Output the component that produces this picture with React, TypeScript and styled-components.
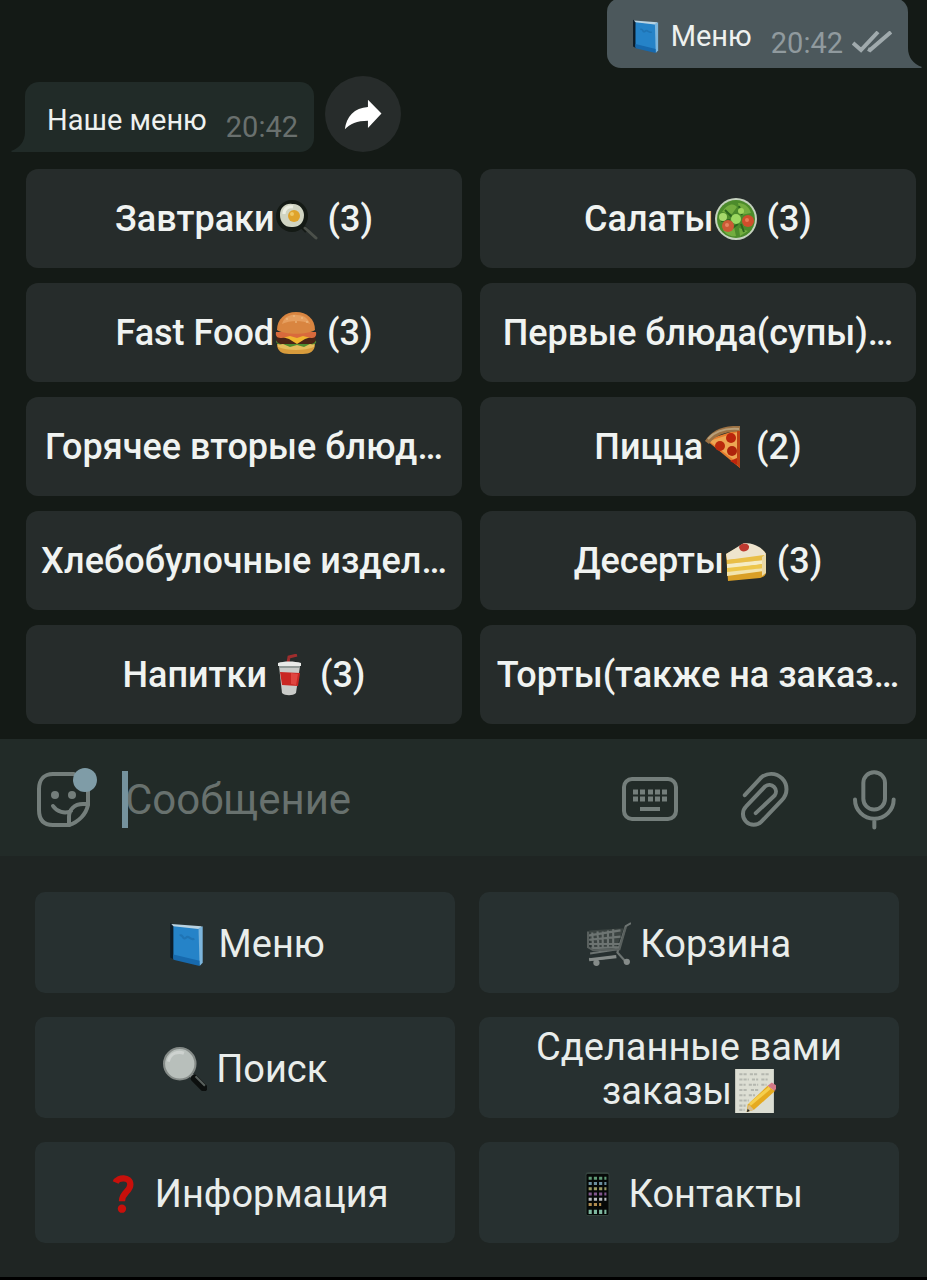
import React from "react";
import styled, { createGlobalStyle } from "styled-components";

const GlobalStyle = createGlobalStyle`
  *, *::before, *::after { box-sizing: border-box; }
  body {
    margin: 0;
    background: #000;
    font-family: Roboto, "Noto Sans", sans-serif;
  }
  button { font-family: inherit; border: 0; padding: 0; cursor: pointer; }
`;

const Screen = styled.main`
  display: flex;
  flex-direction: column;
  padding-bottom: 3px;
  overflow: hidden;
`;

/* ---------- chat ---------- */

const Chat = styled.section`
  display: flex;
  flex-direction: column;
  margin-top: -2px;
  padding: 0 11px 15px 25px;
  background: #141a16;
`;

const MessageRow = styled.div<{ $own?: boolean }>`
  display: flex;
  align-items: flex-end;
  gap: 11px;
  justify-content: ${(p) => (p.$own ? "flex-end" : "flex-start")};
  padding-right: ${(p) => (p.$own ? "8px" : "0")};
  margin-bottom: ${(p) => (p.$own ? "8px" : "17px")};
`;

const Bubble = styled.div<{ $own?: boolean }>`
  position: relative;
  display: flex;
  align-items: flex-end;
  padding: 20px 16px 8px 22px;
  border-radius: 14px;
  border-bottom-right-radius: ${(p) => (p.$own ? "0" : "14px")};
  border-bottom-left-radius: ${(p) => (p.$own ? "14px" : "0")};
  background: ${(p) => (p.$own ? "#4c585c" : "#212b28")};
`;

const Tail = styled.svg<{ $own?: boolean }>`
  position: absolute;
  bottom: 0;
  ${(p) => (p.$own ? "left: 100%;" : "right: 100%; transform: scaleX(-1);")}
  width: 14px;
  height: 20px;
  fill: ${(p) => (p.$own ? "#4c585c" : "#212b28")};
`;

const MessageText = styled.span`
  margin-bottom: 6px;
  font-size: 29px;
  line-height: 36px;
  color: #eef1ef;
  white-space: nowrap;
`;

const Time = styled.time<{ $own?: boolean }>`
  margin-left: 19px;
  font-size: 29px;
  line-height: 34px;
  color: ${(p) => (p.$own ? "#909a9e" : "#69706e")};
`;

const Checks = styled.svg`
  width: 40px;
  height: 22px;
  margin: 0 0 7px 9px;
  fill: none;
  stroke: #a0aaad;
  stroke-width: 4;
`;

const ShareButton = styled.button`
  display: grid;
  place-items: center;
  width: 76px;
  height: 76px;
  border-radius: 50%;
  background: #272c2b;
`;

/* ---------- inline menu ---------- */

const InlineMenu = styled.div`
  display: grid;
  grid-template-columns: 1fr 1fr;
  gap: 15px 18px;
  padding-left: 1px;
`;

const InlineButton = styled.button`
  height: 99px;
  overflow: hidden;
  border-radius: 12px;
  background: #262c2b;
  color: #f0f3f1;
  font-size: 36px;
  font-weight: 500;
  line-height: 42px;
  white-space: nowrap;
`;

/* ---------- message field ---------- */

const InputBar = styled.form`
  display: flex;
  align-items: center;
  height: 117px;
  padding: 3px 30px 0 36px;
  background: #222b28;
`;

const Field = styled.label`
  position: relative;
  flex: 1;
  min-width: 0;
  margin-left: 24px;
`;

const Caret = styled.span`
  position: absolute;
  top: 0;
  left: 0;
  width: 6px;
  height: 57px;
  background: #75929d;
`;

const MessageInput = styled.input`
  display: block;
  width: 100%;
  height: 57px;
  padding: 0 0 0 3px;
  border: 0;
  outline: 0;
  background: transparent;
  color: #eef1ef;
  font-family: inherit;
  font-size: 42px;
  &::placeholder { color: #68716e; opacity: 1; }
`;

const Tools = styled.div`
  display: flex;
  align-items: center;
  gap: 62px;
`;

const IconButton = styled.button`
  display: flex;
  background: none;
`;

const LineIcon = styled.svg`
  fill: none;
  stroke: #747e7b;
  stroke-linecap: round;
  stroke-linejoin: round;
`;

/* ---------- reply keyboard ---------- */

const Keyboard = styled.section`
  display: grid;
  grid-template-columns: 1fr 1fr;
  gap: 24px;
  padding: 36px 28px 34px 35px;
  background: #1f2523;
`;

const Key = styled.button`
  height: 101px;
  padding: 3px 40px 0;
  border-radius: 10px;
  background: #273030;
  color: #e9edeb;
  font-size: 38px;
  line-height: 44px;
`;

/* ---------- emoji ---------- */

const EmojiSvg = styled.svg<{ $size: number }>`
  width: ${(p) => p.$size}px;
  height: ${(p) => p.$size}px;
  margin: 0 ${(p) => (p.$size === 42 ? "1px" : "0")};
  vertical-align: ${(p) => (p.$size < 40 ? "-7px" : "-9px")};
`;

const art = {
  book: (
    <>
      <path d="M5 1 9 3V36L5 34Z" fill="#0d1c28" />
      <path d="M6 2 35 4 34 8 9 5Z" fill="#b9d3e2" />
      <path d="M8 4 34 7V41L8 35Z" fill="#2583c8" />
      <path d="M32 6 36 4V39L33 42Z" fill="#7cb5dc" />
      <path d="M8 31 33 37V42L8 36Z" fill="#1769ad" />
      <path d="M14 13c3-2 3 5 6 2s4 3 8 1" fill="none" stroke="#1f74b4" strokeWidth="2" />
    </>
  ),
  pan: (
    <>
      <path d="m26 28 5 5" stroke="#151a16" strokeWidth="5" />
      <path d="m29 30 11 10" stroke="#4b504a" strokeWidth="3" strokeLinecap="round" />
      <circle cx="16" cy="18" r="16" fill="#141a15" />
      <path d="M4 17C4 9 10 5 16 6c7-1 12 5 12 11 0 8-5 12-11 12C9 30 4 24 4 17Z" fill="#d0d4c2" />
      <path d="M8 16c0-6 5-8 9-7" fill="none" stroke="#eceee2" strokeWidth="3" />
      <circle cx="18" cy="18" r="6" fill="#dfa32b" />
      <circle cx="16" cy="16" r="2" fill="#efc864" />
    </>
  ),
  salad: (
    <>
      <circle cx="21" cy="21" r="21" fill="#c5d2bf" />
      <circle cx="21" cy="21" r="19" fill="#4c8b2b" />
      <path d="M7 14c6-9 12-9 15-5l-5 7ZM23 5c8 0 12 6 13 10l-10 2ZM8 31c2 6 9 8 13 7l-2-9ZM24 30l9 3-8 5Z" fill="#73ad3f" />
      <path d="m10 12 8 8M24 8l3 9M16 31l7-5M29 34l-3-8M6 23l9-1" stroke="#2d661e" strokeWidth="2" />
      <circle cx="21" cy="21" r="5" fill="#9cd961" />
      <circle cx="8" cy="19" r="4" fill="#a6d96c" />
      <circle cx="26" cy="13" r="3" fill="#a0d45d" />
      <circle cx="13" cy="28" r="6" fill="#cc5a35" />
      <circle cx="33" cy="23" r="6" fill="#cf4e2c" />
      <circle cx="12" cy="27" r="2" fill="#e58560" />
      <circle cx="32" cy="22" r="2" fill="#e77a55" />
    </>
  ),
  burger: (
    <>
      <path d="M2 32h38c0 7-5 10-12 10H14C7 42 2 39 2 32Z" fill="#d79b3c" />
      <path d="M3 32h36v3c-9 4-27 4-36 0Z" fill="#e6bc5c" />
      <path d="M1 29c4-3 36-3 40 0 1 3-3 4-6 3l-6 3-7-2-7 2-7-3c-4 1-7 0-7-3Z" fill="#4f8e31" />
      <path d="M2 24h38c2 6-1 8-5 8H7c-4 0-7-2-5-8Z" fill="#4b2416" />
      <path d="m4 24 10 3 8 5 8-5 9-3Z" fill="#f0b52e" />
      <path d="M1 20h40c1 5-2 6-5 6l-8-2-6 2-7-2-8 2c-4 0-7-1-6-6Z" fill="#d96a3c" />
      <path d="M2 18C2 7 10 0 21 0s19 7 19 18c-8 5-30 5-38 0Z" fill="#d98540" />
      <path d="M7 12C9 4 17 2 22 3c8 0 12 5 13 9-7-4-20-4-28 0Z" fill="#e69e5e" />
      <path d="M11 7h2M18 4h2M26 6h2M31 10h2M20 10h2" stroke="#f0c48c" strokeWidth="1" />
    </>
  ),
  pizza: (
    <>
      <path d="M2 14 36 3V42Z" fill="#e67c2d" />
      <path d="M5 15 34 6v31Z" fill="#eda652" />
      <path d="M1 15C7 5 19-1 36 0v6C22 5 12 9 5 18Z" fill="#9b7143" />
      <path d="M4 13C11 5 21 2 35 3" fill="none" stroke="#b9a07a" strokeWidth="2" />
      <path d="M33 5h3v37l-3-3Z" fill="#bd4214" />
      <circle cx="27" cy="12" r="5" fill="#bb260c" />
      <circle cx="16" cy="20" r="5" fill="#bb2a0d" />
      <circle cx="28" cy="25" r="5" fill="#ae240c" />
      <path d="m26 35 7-3v7Z" fill="#bd250c" />
    </>
  ),
  cake: (
    <>
      <path d="M1 14 19 4c9 0 19 4 22 10v19c-1 4-4 4-6 5L3 41Z" fill="#d99f26" />
      <path d="M1 14 19 3c10 0 19 5 22 11l-2 3L2 20Z" fill="#eee4cd" />
      <path d="M2 20 39 15v5L2 24Z" fill="#e9be46" />
      <path d="M2 24 39 20v4L2 29Z" fill="#f5ecc4" />
      <path d="M2 28 39 24v4L2 33Z" fill="#edc64b" />
      <path d="M2 32 39 28v3L2 36Z" fill="#f2e4ae" />
      <path d="m37 17 4-3v19l-4 3Z" fill="#ead9a7" />
      <path d="M14 7c1-4 8-5 10-1 1 6-9 8-10 1Z" fill="#bd3930" />
    </>
  ),
  drink: (
    <>
      <path d="m20 9 1-6 8-2" fill="none" stroke="#9e2d2d" strokeWidth="3" />
      <path d="M11 12h21l-4 27c-3 3-11 3-14 0Z" fill="#c9cbc8" />
      <path d="m12 18 20 1-2 13-16-1Z" fill="#c92622" />
      <path d="m23 19 7 1-2 11-5-1Z" fill="#e04540" />
      <path d="M10 9c5-2 17-2 23 0v3H10Z" fill="#e9ebe9" />
      <path d="M11 13h21" stroke="#929a97" strokeWidth="2" />
    </>
  ),
  cart: (
    <>
      <path d="m2 8 33-2-7 19-24 1Z" fill="#3c4442" />
      <path d="m42 1-5 3-8 25 8 9M1 13l31-5M2 17l30-3M2 21h29M4 25l26-1M5 10l1 16M10 9l1 16M15 9v16M20 8v16M25 7v17M3 30l26-4M27 33 7 36l-5-1" fill="none" stroke="#6d7472" strokeWidth="2" />
      <path d="M1 9v15l5 3 25-1L37 5" fill="none" stroke="#59605e" strokeWidth="2" />
      <path d="M2 36 28 33" stroke="#858b89" strokeWidth="3" />
      <circle cx="9" cy="39" r="3" fill="#858b89" />
      <circle cx="38" cy="38" r="3" fill="#858b89" />
    </>
  ),
  lens: (
    <>
      <path d="m27 27 4 4" stroke="#8d9391" strokeWidth="4" />
      <path d="m30 30 9 9" stroke="#0c0f0e" strokeWidth="7" strokeLinecap="round" />
      <path d="m31 28 9 9" stroke="#59605d" strokeWidth="2" />
      <circle cx="16" cy="16" r="15" fill="#b8bfbb" stroke="#858b88" strokeWidth="2" />
      <path d="M5 14C7 5 15 4 20 6" fill="none" stroke="#cdd2cf" strokeWidth="3" />
    </>
  ),
  note: (
    <>
      <path d="M3 0h37v42H3Z" fill="#dcded3" />
      <path d="M7 5h7m3 0h8m3 0h7M7 10h9m3 0h6m3 0h6M7 15h6m3 0h9m3 0h5M7 20h8m3 0h8M7 25h6m3 0h6M7 30h9M7 35h6M7 39h5" stroke="#b4b7af" strokeWidth="2" strokeDasharray="3 1" />
      <path d="m15 34 19-18 7 5-20 18-7 2Z" fill="#e5aa20" />
      <path d="m17 34 19-16" stroke="#f5cf4e" strokeWidth="3" />
      <path d="m14 41 2-7 5 5Z" fill="#d5bd91" />
      <path d="m14 41 1-3 2 2Z" fill="#272723" />
      <path d="m34 16 4-3 5 3-2 5Z" fill="#d47988" />
    </>
  ),
  question: (
    <>
      <path d="M14 10c2-5 14-6 14 2 0 7-8 7-8 16" fill="none" stroke="#c8100b" strokeWidth="6" />
      <circle cx="20" cy="35" r="4" fill="#c8100b" />
    </>
  ),
  phone: (
    <>
      <rect x="10" y="0" width="23" height="42" rx="3" fill="#33413c" />
      <rect x="11" y="2" width="21" height="39" rx="1" fill="#060908" />
      <path d="M13 6h17" stroke="#5f9a76" strokeWidth="3" strokeDasharray="3 2" />
      <path d="M13 11h17" stroke="#6b8fa0" strokeWidth="3" strokeDasharray="3 2" />
      <path d="M13 16h17" stroke="#9c9b65" strokeWidth="3" strokeDasharray="3 2" />
      <path d="M13 21h17" stroke="#81568d" strokeWidth="3" strokeDasharray="3 2" />
      <path d="M13 26h17" stroke="#b7bcc0" strokeWidth="3" strokeDasharray="3 2" />
      <path d="M13 31h12" stroke="#b08c4e" strokeWidth="3" strokeDasharray="3 2" />
      <path d="M13 38h17" stroke="#7fb8a0" strokeWidth="4" strokeDasharray="3 2" />
    </>
  ),
};

type EmojiName = keyof typeof art;

function Emoji({ name, size }: { name: EmojiName; size: number }) {
  return (
    <EmojiSvg $size={size} viewBox="0 0 42 42" aria-hidden="true">
      {art[name]}
    </EmojiSvg>
  );
}

function BubbleTail({ own }: { own?: boolean }) {
  return (
    <Tail $own={own} viewBox="0 0 14 20" aria-hidden="true">
      <path d="M0 0C0 9 5 16 14 19L13 20H0Z" />
    </Tail>
  );
}

const categories: { label: string; emoji?: EmojiName; count?: number }[] = [
  { label: "Завтраки", emoji: "pan", count: 3 },
  { label: "Салаты", emoji: "salad", count: 3 },
  { label: "Fast Food", emoji: "burger", count: 3 },
  { label: "Первые блюда(супы)…" },
  { label: "Горячее вторые блюд…" },
  { label: "Пицца", emoji: "pizza", count: 2 },
  { label: "Хлебобулочные издел…" },
  { label: "Десерты", emoji: "cake", count: 3 },
  { label: "Напитки", emoji: "drink", count: 3 },
  { label: "Торты(также на заказ…" },
];

const keys: { label: string; emoji: EmojiName; after?: boolean }[] = [
  { label: "Меню", emoji: "book" },
  { label: "Корзина", emoji: "cart" },
  { label: "Поиск", emoji: "lens" },
  { label: "Сделанные вами заказы", emoji: "note", after: true },
  { label: "Информация", emoji: "question" },
  { label: "Контакты", emoji: "phone" },
];

export default function App() {
  return (
    <Screen>
      <GlobalStyle />
      <Chat>
        <MessageRow $own>
          <Bubble $own>
            <MessageText>
              <Emoji name="book" size={34} /> Меню
            </MessageText>
            <Time $own>20:42</Time>
            <Checks viewBox="0 0 40 22" aria-hidden="true">
              <path d="M1 12 9 19 26 1M16 18l2 1L39 1" />
            </Checks>
            <BubbleTail own />
          </Bubble>
        </MessageRow>
        <MessageRow>
          <Bubble>
            <MessageText>Наше меню</MessageText>
            <Time>20:42</Time>
            <BubbleTail />
          </Bubble>
          <ShareButton type="button" aria-label="Переслать">
            <svg width="40" height="33" viewBox="1028 78 120 100" fill="#fff">
              <path d="M1103 83 1144 125 1103 169V147C1070 147 1048 157 1033 173 1037 135 1062 107 1103 105Z" />
            </svg>
          </ShareButton>
        </MessageRow>
        <InlineMenu>
          {categories.map((c) => (
            <InlineButton type="button" key={c.label}>
              {c.label}
              {c.emoji && <Emoji name={c.emoji} size={42} />}
              {c.count && ` (${c.count})`}
            </InlineButton>
          ))}
        </InlineMenu>
      </Chat>

      <InputBar onSubmit={(e) => e.preventDefault()}>
        <IconButton type="button" aria-label="Стикеры">
          <LineIcon width="62" height="62" viewBox="36 768 62 62" strokeWidth="4">
            <path d="M74 774H53C44 774 39 780 39 789v21c0 10 5 15 14 15h16c10-3 17-11 19-20V788" />
            <path d="M88 804h-5c-9 0-14 6-14 13v8M53 806c4 6 12 8 18 5" />
            <g fill="#747e7b" stroke="none">
              <circle cx="55" cy="795" r="4" />
              <circle cx="72" cy="795" r="4" />
            </g>
            <circle cx="85" cy="780" r="12" fill="#7f9ca7" stroke="none" />
          </LineIcon>
        </IconButton>
        <Field>
          <MessageInput type="text" placeholder="Сообщение" aria-label="Сообщение" />
          <Caret />
        </Field>
        <Tools>
          <IconButton type="button" aria-label="Клавиатура">
            <LineIcon width="56" height="44" viewBox="0 0 56 44" strokeWidth="4">
              <rect x="2" y="2" width="52" height="40" rx="8" />
              <path
                d="M11 15h5m2 0h5m3 0h5m2 0h5m2 0h5M11 22h5m2 0h5m3 0h5m2 0h5m2 0h5"
                strokeWidth="5"
                strokeLinecap="butt"
              />
              <path d="M18 32h20" strokeLinecap="butt" />
            </LineIcon>
          </IconButton>
          <IconButton type="button" aria-label="Прикрепить">
            <LineIcon width="50" height="58" viewBox="420 105 150 175" strokeWidth="12">
              <path d="M434 181 481 130A46 46 0 0 1 546 196L484 261A32 32 0 0 1 438 215L496 154A20 20 0 0 1 524 182L467 235" />
            </LineIcon>
          </IconButton>
          <IconButton type="button" aria-label="Голосовое сообщение">
            <LineIcon width="45" height="62" viewBox="755 100 135 185" strokeWidth="12">
              <rect x="789" y="112" width="65" height="112" rx="32" />
              <path d="M764 194A58 58 0 0 0 880 194M822 252V278" />
            </LineIcon>
          </IconButton>
        </Tools>
      </InputBar>

      <Keyboard>
        {keys.map((k) => (
          <Key type="button" key={k.label}>
            {!k.after && <Emoji name={k.emoji} size={44} />}
            {!k.after && " "}
            {k.label}
            {k.after && <Emoji name={k.emoji} size={44} />}
          </Key>
        ))}
      </Keyboard>
    </Screen>
  );
}
